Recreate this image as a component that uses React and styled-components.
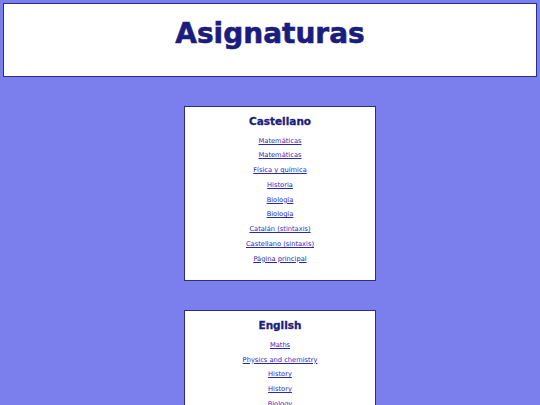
import React from "react"
import styled, { createGlobalStyle } from "styled-components"

const GlobalStyle = createGlobalStyle`
  html, body {
    margin: 0;
    padding: 0;
    background: #7b7fee;
  }
  body {
    padding: 3px;
    font-family: "DejaVu Sans", Verdana, sans-serif;
  }
`

const Header = styled.header`
  height: 72px;
  background: #ffffff;
  border: 1px solid #2b2d86;
  display: flex;
  justify-content: center;
  h1 {
    margin: 0;
    padding-top: 11px;
    font-family: "DejaVu Sans", Verdana, sans-serif;
    font-weight: 700;
    font-size: 28px;
    line-height: 38px;
    color: #1a1d7e;
    -webkit-text-stroke: 0.6px #1a1d7e;
  }
`

const Main = styled.main`
  display: flex;
  flex-direction: column;
  align-items: center;
  gap: 29px;
  padding: 29px 0 0 20px;
`

const Card = styled.section`
  width: 190px;
  background: #ffffff;
  border: 1px solid #2b2d86;
  padding: 7px 0 14px;
  text-align: center;
  h2 {
    margin: 0 0 4.5px;
    font-family: "DejaVu Sans", Verdana, sans-serif;
    font-weight: 700;
    font-size: 10.5px;
    line-height: 15px;
    color: #1a1d7e;
    -webkit-text-stroke: 0.3px #1a1d7e;
  }
`

const LinkItem = styled.a`
  display: block;
  font-size: 6.7px;
  line-height: 14.75px;
  color: #2828b8;
  text-decoration: underline;
`

const subjects = [
  {
    title: "Castellano",
    links: [
      "Matemáticas",
      "Matemáticas",
      "Física y química",
      "Historia",
      "Biología",
      "Biología",
      "Catalán (stintaxis)",
      "Castellano (sintaxis)",
      "Página principal",
    ],
  },
  {
    title: "English",
    links: [
      "Maths",
      "Physics and chemistry",
      "History",
      "History",
      "Biology",
      "Biology",
      "Catalan (syntax)",
      "Spanish (syntax)",
      "Main page",
    ],
  },
]

const App = () => {
  return (
    <>
      <GlobalStyle />
      <Header>
        <h1>Asignaturas</h1>
      </Header>
      <Main>
        {subjects.map(s => (
          <Card key={s.title}>
            <h2>{s.title}</h2>
            {s.links.map((l, i) => (
              <LinkItem key={i} href="#">
                {l}
              </LinkItem>
            ))}
          </Card>
        ))}
      </Main>
    </>
  )
}

export default App
